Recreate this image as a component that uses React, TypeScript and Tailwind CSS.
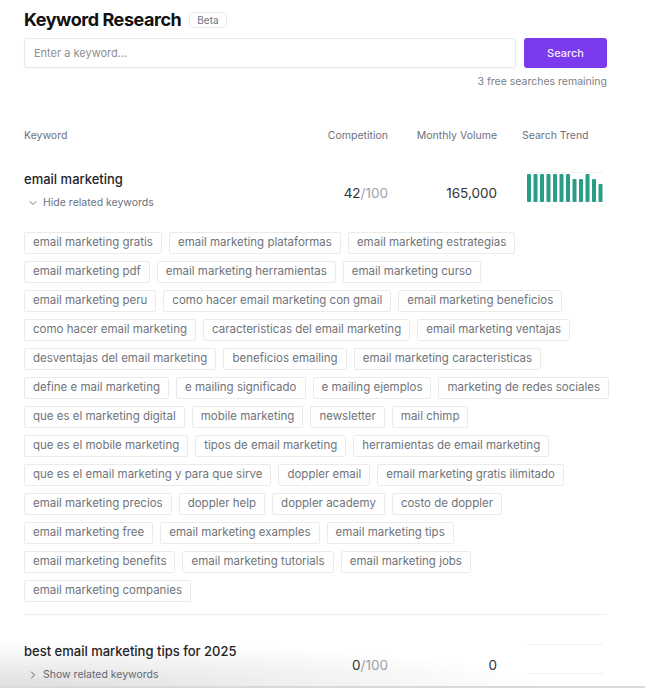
import { ChevronDown, ChevronRight } from 'lucide-react'

const related: string[][] = [
  ['email marketing gratis', 'email marketing plataformas', 'email marketing estrategias'],
  ['email marketing pdf', 'email marketing herramientas', 'email marketing curso'],
  ['email marketing peru', 'como hacer email marketing con gmail', 'email marketing beneficios'],
  ['como hacer email marketing', 'caracteristicas del email marketing', 'email marketing ventajas'],
  ['desventajas del email marketing', 'beneficios emailing', 'email marketing caracteristicas'],
  ['define e mail marketing', 'e mailing significado', 'e mailing ejemplos', 'marketing de redes sociales'],
  ['que es el marketing digital', 'mobile marketing', 'newsletter', 'mail chimp'],
  ['que es el mobile marketing', 'tipos de email marketing', 'herramientas de email marketing'],
  ['que es el email marketing y para que sirve', 'doppler email', 'email marketing gratis ilimitado'],
  ['email marketing precios', 'doppler help', 'doppler academy', 'costo de doppler'],
  ['email marketing free', 'email marketing examples', 'email marketing tips'],
  ['email marketing benefits', 'email marketing tutorials', 'email marketing jobs'],
  ['email marketing companies'],
]

// monthly search trend, relative to the max
const trend = [1, 1, 1, 1, 1, 1, 1, 0.82, 0.82, 1, 0.82, 0.66]

function TrendChart({ data }: { data: number[] }) {
  return (
    <div className="h-[30px] w-[76px] border-y border-[#f1f1f1]">
      {data.length > 0 && (
        <svg width="76" height="29" viewBox="0 0 76 29" className="block">
          {data.map((v, i) => {
            const h = Math.round(28 * v)
            return (
              <rect key={i} x={i * 6.5} y={29 - h} width="4" height={h} rx="1" fill="#2a9d86" />
            )
          })}
        </svg>
      )}
    </div>
  )
}

function KeywordRow({
  name,
  competition,
  volume,
  open,
  data,
}: {
  name: string
  competition: number
  volume: string
  open: boolean
  data: number[]
}) {
  return (
    <div className="grid grid-cols-[1fr_110px_109px_110px] items-start">
      <div>
        <div className="text-[13px] font-medium leading-5 text-[#1f2328]">{name}</div>
        <button className="mt-1.5 flex items-center gap-1 pl-[3px] text-[10.5px] leading-4 text-[#6b7280]">
          {open ? (
            <ChevronDown className="h-3 w-3" strokeWidth={2} />
          ) : (
            <ChevronRight className="h-3 w-3" strokeWidth={2} />
          )}
          {open ? 'Hide related keywords' : 'Show related keywords'}
        </button>
      </div>
      <div className="pt-[14px] text-right text-[13.5px] leading-5">
        <span className="text-[#333]">{competition}</span>
        <span className="text-[#9ca3af]">/100</span>
      </div>
      <div className="pt-[14px] text-right text-[13.5px] leading-5 text-[#333]">{volume}</div>
      <div className="pl-[30px] pt-[3px]">
        <TrendChart data={data} />
      </div>
    </div>
  )
}

export default function App() {
  return (
    <div className="relative h-[688px] overflow-hidden bg-white font-['Inter',sans-serif]">
      <div className="ml-6 w-[583px] pt-[6px]">
        <div className="flex h-7 items-center gap-2">
          <h1 className="text-lg font-bold tracking-tight text-[#111]">Keyword Research</h1>
          <span className="flex h-4 items-center rounded-sm border border-[#e5e7eb] px-[7px] text-[10px] text-[#6b7280]">
            Beta
          </span>
        </div>

        <div className="mt-1 flex gap-2">
          <input
            placeholder="Enter a keyword..."
            className="h-[30px] flex-1 rounded-[3px] border border-[#e8e8e8] px-[9px] text-[11px] text-gray-700 shadow-[0_1px_2px_rgba(0,0,0,0.04)] outline-none placeholder:text-[#8b8f96]"
          />
          <button className="h-[30px] w-[83px] rounded-[3px] bg-[#7c3aed] text-[11px] font-medium text-[#f3ecff]">
            Search
          </button>
        </div>
        <p className="mt-[6px] text-right text-[10.5px] leading-4 text-[#7b7f86]">3 free searches remaining</p>

        <div className="mt-[38px] grid grid-cols-[1fr_110px_109px_110px] text-[10.5px] leading-4 text-[#6b7280]">
          <div>Keyword</div>
          <div className="text-right">Competition</div>
          <div className="text-right">Monthly Volume</div>
          <div className="pl-[25px]">Search Trend</div>
        </div>

        <div className="mt-[25px]">
          <KeywordRow name="email marketing" competition={42} volume="165,000" open data={trend} />
        </div>

        <div className="mt-[21px] flex flex-col gap-[7px]">
          {related.map((row, i) => (
            <div key={i} className="flex gap-[7px]">
              {row.map((k) => (
                <span
                  key={k}
                  className="flex h-[22px] items-center whitespace-nowrap rounded-[2px] border border-[#ebebeb] px-2 text-[11.5px] text-[#6f737a]"
                >
                  {k}
                </span>
              ))}
            </div>
          ))}
        </div>

        <div className="mt-3 border-t border-[#eeeeee]" />

        <div className="mt-[26px]">
          <KeywordRow name="best email marketing tips for 2025" competition={0} volume="0" open={false} data={[]} />
        </div>
      </div>

      <div className="pointer-events-none absolute bottom-0 left-0 h-[48px] w-[560px] bg-[radial-gradient(ellipse_at_bottom_left,rgba(0,0,0,0.13),transparent_70%)]" />
      <div className="pointer-events-none absolute bottom-0 left-0 h-[2px] w-full bg-[#d9d9d9]" />
    </div>
  )
}
